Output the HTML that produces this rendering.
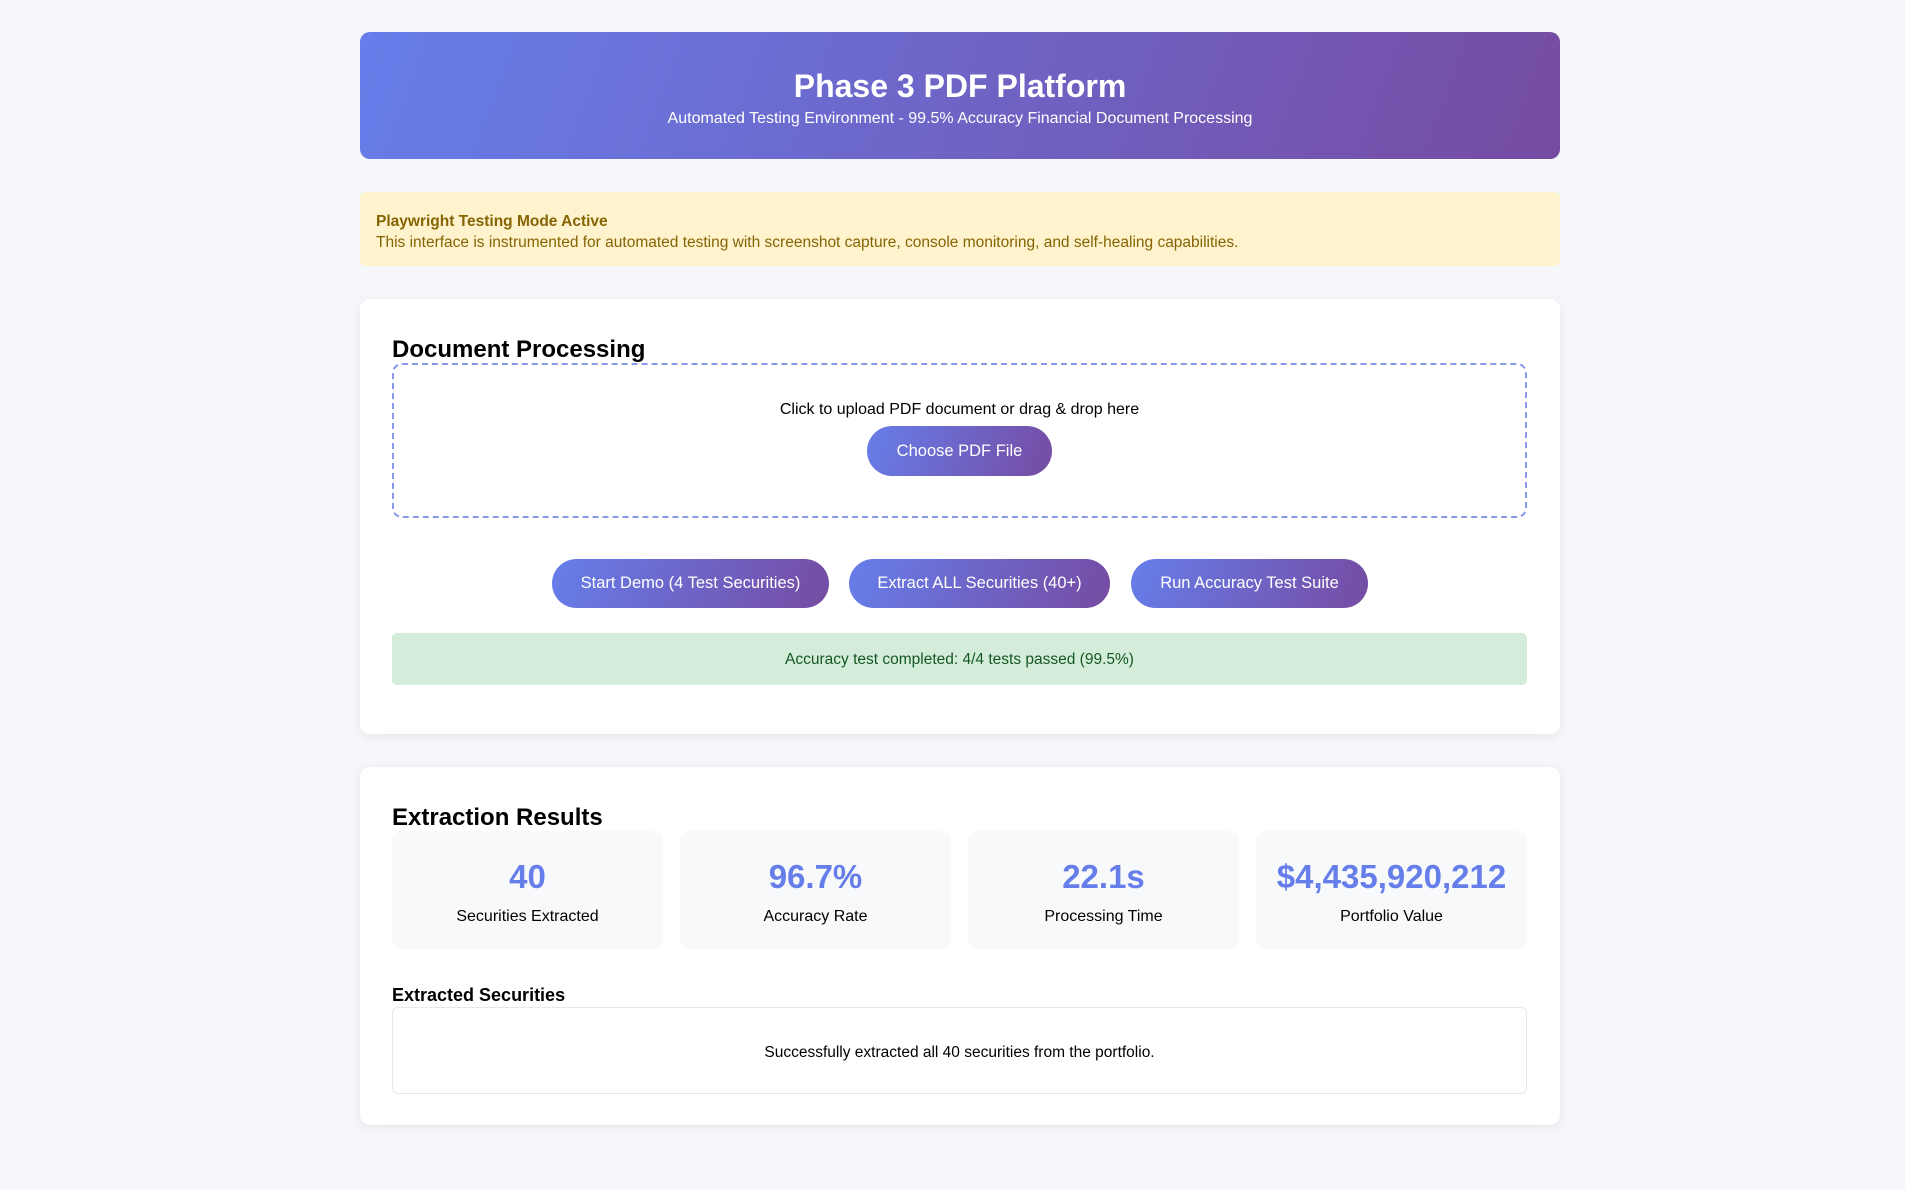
<!DOCTYPE html>
<html><head><meta charset="utf-8"><style>
*{box-sizing:border-box;margin:0;padding:0}
body{width:1905px;height:1190px;background:#f5f7fa;font-family:"Liberation Sans",sans-serif;position:relative;overflow:hidden;color:#000}
.abs{position:absolute}
.header{left:360px;top:32px;width:1200px;height:127px;border-radius:10px;background:linear-gradient(110deg,#667eea,#764ba2);color:#fff;text-align:center}
.header h1{position:absolute;top:36px;left:0;right:0;font-size:32px;font-weight:bold}
.header p{position:absolute;top:78px;left:0;right:0;font-size:16px}
.warn{left:360px;top:192px;width:1200px;height:74px;background:#fff3cd;border-radius:6px;color:#856404;font-size:15.5px;padding:19px 16px;line-height:21px}
.card{left:360px;width:1200px;background:#fff;border-radius:10px;box-shadow:0 2px 10px rgba(0,0,0,0.08)}
h2{position:absolute;font-size:24px;font-weight:bold}
.drop{left:392px;top:363px;width:1135px;height:155px;border:2px dashed #8898ea;border-radius:10px;text-align:center}
.btn{position:absolute;background:linear-gradient(110deg,#667eea,#764ba2);color:#fff;border-radius:26px;font-size:16.5px;display:flex;align-items:center;justify-content:center}
.status{left:392px;top:633px;width:1135px;height:52px;background:#d4edda;color:#155724;border-radius:5px;text-align:center;line-height:54px;font-size:15.5px}
.stat{top:831px;width:271px;height:118px;background:#f8f9fa;border-radius:10px;text-align:center}
.stat b{display:block;margin-top:27px;font-size:33px;color:#667eea;line-height:38px}
.stat span{display:block;margin-top:12px;font-size:16px}
.list{left:392px;top:1007px;width:1135px;height:87px;border:1px solid #e6e8ea;border-radius:6px;text-align:center;line-height:89px;font-size:15.5px}
</style></head><body>
<div class="abs header"><h1>Phase 3 PDF Platform</h1><p>Automated Testing Environment - 99.5% Accuracy Financial Document Processing</p></div>
<div class="abs warn"><b>Playwright Testing Mode Active</b><br>This interface is instrumented for automated testing with screenshot capture, console monitoring, and self-healing capabilities.</div>
<div class="abs card" style="top:299px;height:435px"></div>
<h2 style="left:392px;top:336px">Document Processing</h2>
<div class="abs drop"><div style="margin-top:36px;font-size:16px">Click to upload PDF document or drag &amp; drop here</div></div>
<div class="btn" style="left:867px;top:426px;width:185px;height:50px">Choose PDF File</div>
<div class="btn" style="left:552px;top:559px;width:277px;height:49px">Start Demo (4 Test Securities)</div>
<div class="btn" style="left:849px;top:559px;width:261px;height:49px">Extract ALL Securities (40+)</div>
<div class="btn" style="left:1131px;top:559px;width:237px;height:49px">Run Accuracy Test Suite</div>
<div class="abs status">Accuracy test completed: 4/4 tests passed (99.5%)</div>
<div class="abs card" style="top:767px;height:358px"></div>
<h2 style="left:392px;top:804px">Extraction Results</h2>
<div class="abs stat" style="left:392px"><b>40</b><span>Securities Extracted</span></div>
<div class="abs stat" style="left:680px"><b>96.7%</b><span>Accuracy Rate</span></div>
<div class="abs stat" style="left:968px"><b>22.1s</b><span>Processing Time</span></div>
<div class="abs stat" style="left:1256px"><b>$4,435,920,212</b><span>Portfolio Value</span></div>
<div class="abs" style="left:392px;top:985px;font-size:18px;font-weight:bold">Extracted Securities</div>
<div class="abs list">Successfully extracted all 40 securities from the portfolio.</div>
</body></html>
